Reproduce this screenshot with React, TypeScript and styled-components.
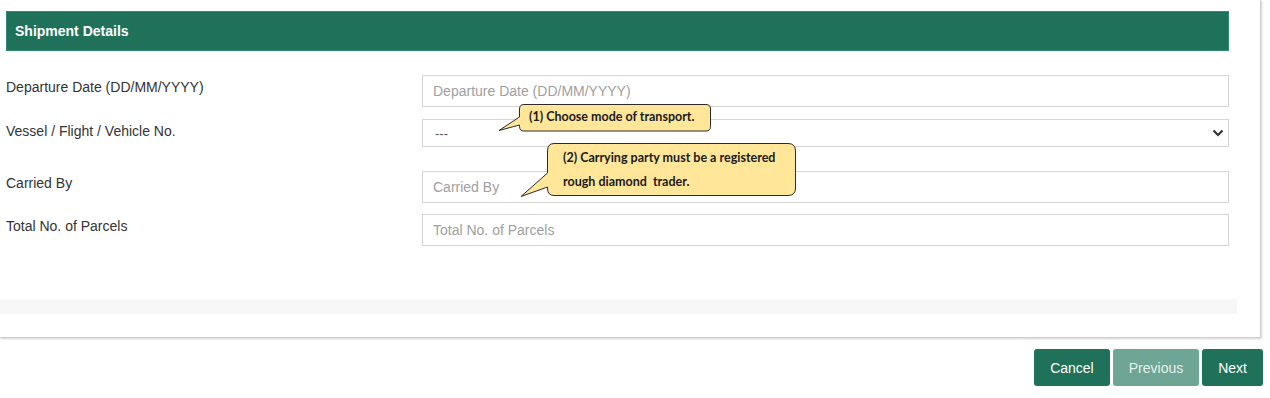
import React from 'react';
import styled, { createGlobalStyle } from 'styled-components';

const GlobalStyle = createGlobalStyle`
  html, body {
    margin: 0;
    padding: 0;
    background: #ffffff;
    font-family: "Liberation Sans", Arial, sans-serif;
  }
`;

const fields = [
  { label: 'Departure Date (DD/MM/YYYY)', placeholder: 'Departure Date (DD/MM/YYYY)', after: 12 },
  { label: 'Vessel / Flight / Vehicle No.', select: true, after: 24 },
  { label: 'Carried By', placeholder: 'Carried By', after: 11 },
  { label: 'Total No. of Parcels', placeholder: 'Total No. of Parcels', after: 0 },
];

const App = () => {
  return (
    <Page>
      <GlobalStyle />
      <Panel>
        <Header>Shipment Details</Header>
        <Form>
          {fields.map((f) => (
            <Row key={f.label} $after={f.after}>
              <Label>{f.label}</Label>
              {f.select ? (
                <SelectWrap>
                  <Select defaultValue="---">
                    <option>---</option>
                  </Select>
                  <Chevron width="12" height="8" viewBox="0 0 12 8">
                    <path d="M1.5 1.5 L6 6 L10.5 1.5" fill="none" stroke="#333" strokeWidth="2.2" />
                  </Chevron>
                </SelectWrap>
              ) : (
                <Input placeholder={f.placeholder} />
              )}
            </Row>
          ))}
        </Form>
        <FooterBar />

        <Callout $left={497} $top={102} $w={216} $h={33}>
          <svg width="216" height="33" viewBox="0 0 216 33">
            <path
              d="M27 2.5 H209 Q213.5 2.5 213.5 7 V24.5 Q213.5 29 209 29 H27 Q22.5 29 22.5 24.5 V23 L2 28.5 L22.5 15 V7 Q22.5 2.5 27 2.5 Z"
              fill="#ffe699"
              stroke="#2b2b2b"
              strokeWidth="1"
            />
          </svg>
          <CalloutText $x={32} $y={3}>(1) Choose mode of transport.</CalloutText>
        </Callout>

        <Callout $left={519} $top={141} $w={278} $h={58}>
          <svg width="278" height="58" viewBox="0 0 278 58">
            <path
              d="M35 2.5 H269 Q276.5 2.5 276.5 10 V47 Q276.5 54.5 269 54.5 H35 Q28.5 54.5 28.5 47 V46 L2 55.5 L28.5 32 V10 Q28.5 2.5 35 2.5 Z"
              fill="#ffe699"
              stroke="#2b2b2b"
              strokeWidth="1"
            />
          </svg>
          <CalloutText $x={44} $y={5}>
            (2) Carrying party must be a registered
            <br />
            rough diamond&nbsp; trader.
          </CalloutText>
        </Callout>
      </Panel>

      <Actions>
        <Button type="button">Cancel</Button>
        <Button type="button" $muted>
          Previous
        </Button>
        <Button type="button">Next</Button>
      </Actions>
    </Page>
  );
};

export default App;

const Page = styled.div`
  width: 1270px;
  height: 398px;
  overflow: hidden;
`;

const Panel = styled.div`
  position: relative;
  width: 1260px;
  padding-top: 11px;
  padding-bottom: 23px;
  border-right: 1px solid #cfcfcf;
  border-bottom: 1px solid #cfcfcf;
  box-shadow: 1px 1px 2px rgba(0, 0, 0, 0.18);
`;

const Header = styled.div`
  margin: 0 31px 0 6px;
  height: 38px;
  display: flex;
  align-items: center;
  padding-left: 8px;
  background: #1f7159;
  border: 1px solid #2f8d73;
  color: #ffffff;
  font-size: 14px;
  font-weight: bold;
`;

const Form = styled.div`
  padding: 24px 31px 0 6px;
  display: flex;
  flex-direction: column;
`;

const Row = styled.div<{ $after: number }>`
  display: flex;
  align-items: flex-start;
  margin-bottom: ${(p) => p.$after}px;
`;

const Label = styled.div`
  width: 416px;
  flex: none;
  padding-top: 2px;
  line-height: 20px;
  font-size: 14px;
  color: #333333;
`;

const Input = styled.input`
  box-sizing: border-box;
  flex: 1;
  height: 32px;
  padding: 0 10px;
  border: 1px solid #d6d6d6;
  border-radius: 0;
  font-family: "Liberation Sans", Arial, sans-serif;
  font-size: 14px;
  color: #555555;
  outline: none;

  &::placeholder {
    color: #a0a0a0;
  }
`;

const SelectWrap = styled.div`
  position: relative;
  flex: 1;
  display: flex;
`;

const Select = styled.select`
  box-sizing: border-box;
  flex: 1;
  height: 28px;
  padding: 0 12px;
  border: 1px solid #d6d6d6;
  border-radius: 0;
  background: #ffffff;
  appearance: none;
  font-family: "Liberation Sans", Arial, sans-serif;
  font-size: 13px;
  color: #555555;
  outline: none;
`;

const Chevron = styled.svg`
  position: absolute;
  right: 5px;
  top: 10px;
  pointer-events: none;
`;

const FooterBar = styled.div`
  margin-top: 53px;
  width: 1237px;
  height: 15px;
  background: #f7f7f7;
`;

const Callout = styled.div<{ $left: number; $top: number; $w: number; $h: number }>`
  position: absolute;
  left: ${(p) => p.$left}px;
  top: ${(p) => p.$top}px;
  width: ${(p) => p.$w}px;
  height: ${(p) => p.$h}px;

  & > svg {
    position: absolute;
    left: 0;
    top: 0;
  }
`;

const CalloutText = styled.div<{ $x: number; $y: number }>`
  position: absolute;
  left: ${(p) => p.$x}px;
  top: ${(p) => p.$y}px;
  white-space: nowrap;
  font-family: Lato, "Open Sans", sans-serif;
  font-weight: bold;
  font-size: 12.5px;
  line-height: 24px;
  color: #1a1a1a;
`;

const Actions = styled.div`
  display: flex;
  justify-content: flex-end;
  gap: 3px;
  padding: 11px 7px 0 0;
`;

const Button = styled.button<{ $muted?: boolean }>`
  height: 37px;
  padding: 0 16px;
  border: none;
  border-radius: 3px;
  background: ${(p) => (p.$muted ? '#6ea595' : '#1f7159')};
  color: ${(p) => (p.$muted ? '#e6f0ec' : '#ffffff')};
  font-family: "Liberation Sans", Arial, sans-serif;
  font-size: 14px;
  cursor: pointer;
`;
